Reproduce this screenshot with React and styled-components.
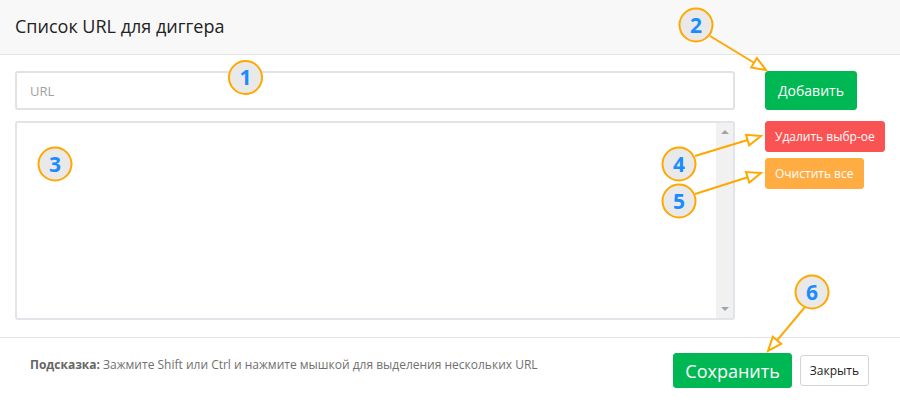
import React from "react";
import styled, { createGlobalStyle } from "styled-components";

const GlobalStyle = createGlobalStyle`
  html, body {
    margin: 0;
    padding: 0;
    background: #ffffff;
  }
  body {
    font-family: "Open Sans", "Noto Sans", sans-serif;
    color: #333;
  }
`;

const ORANGE = "#ffa800";
const BLUE = "#1a8cff";

function Arrow({ x1, y1, x2, y2 }) {
  const dx = x2 - x1;
  const dy = y2 - y1;
  const len = Math.hypot(dx, dy);
  const ux = dx / len;
  const uy = dy / len;
  const head = 14;
  const half = 5.5;
  const bx = x2 - ux * head;
  const by = y2 - uy * head;
  const p1 = `${bx - uy * half},${by + ux * half}`;
  const p2 = `${bx + uy * half},${by - ux * half}`;
  return (
    <g stroke={ORANGE} strokeWidth="2" fill="none" strokeLinejoin="miter">
      <line x1={x1} y1={y1} x2={bx} y2={by} />
      <polygon points={`${x2},${y2} ${p1} ${p2}`} fill="#fff" />
    </g>
  );
}

function Marker({ cx, cy, n }) {
  return (
    <g>
      <circle cx={cx} cy={cy} r="16.5" fill="#e9e9e9" stroke={ORANGE} strokeWidth="2" />
      <text
        x={cx}
        y={cy + 7.5}
        textAnchor="middle"
        fontFamily="'Open Sans', sans-serif"
        fontWeight="700"
        fontSize="21"
        fill={BLUE}
      >
        {n}
      </text>
    </g>
  );
}

function Annotations() {
  return (
    <Overlay width="900" height="403" viewBox="0 0 900 403">
      <Arrow x1={710} y1={36} x2={766} y2={70} />
      <Arrow x1={695} y1={156} x2={761} y2={136} />
      <Arrow x1={695} y1={194} x2={761} y2={173} />
      <Arrow x1={805} y1={307} x2={768} y2={351} />
      <Marker cx={245.5} cy={77.5} n="1" />
      <Marker cx={696} cy={25} n="2" />
      <Marker cx={55} cy={164} n="3" />
      <Marker cx={679} cy={164} n="4" />
      <Marker cx={679} cy={201} n="5" />
      <Marker cx={812} cy={292} n="6" />
    </Overlay>
  );
}

export default function App() {
  return (
    <>
      <GlobalStyle />
      <Modal>
        <Header>
          <Title>Список URL для диггера</Title>
        </Header>
        <Body>
          <UrlInput placeholder="URL" />
          <Button $variant="green" $size="md">Добавить</Button>
          <ListBox>
            <ListArea />
            <Track>
              <TriUp />
              <TriDown />
            </Track>
          </ListBox>
          <Stack>
            <Button $variant="red" $size="sm">Удалить выбр-ое</Button>
            <Button $variant="orange" $size="sm">Очистить все</Button>
          </Stack>
        </Body>
        <Footer>
          <Hint>
            <b>Подсказка:</b> Зажмите Shift или Ctrl и нажмите мышкой для выделения нескольких URL
          </Hint>
          <Actions>
            <Button $variant="green" $size="lg">Сохранить</Button>
            <Button $variant="default" $size="sm">Закрыть</Button>
          </Actions>
        </Footer>
        <Annotations />
      </Modal>
    </>
  );
}

const Modal = styled.div`
  position: relative;
  width: 900px;
  height: 403px;
  background: #fff;
  overflow: hidden;
`;

const Overlay = styled.svg`
  position: absolute;
  inset: 0;
  pointer-events: none;
`;

const Header = styled.div`
  box-sizing: border-box;
  height: 55px;
  background: #f8f8f8;
  border-bottom: 1px solid #e5e5e5;
  display: flex;
  align-items: center;
  padding: 0 15px;
`;

const Title = styled.h4`
  margin: 0;
  font-size: 18px;
  font-weight: 400;
  color: #222;
  padding-bottom: 2px;
`;

const Body = styled.div`
  display: grid;
  grid-template-columns: 720px auto;
  grid-template-rows: 39px 199px;
  column-gap: 30px;
  row-gap: 11px;
  padding: 16px 15px 17px;
  border-bottom: 1px solid #e5e5e5;
  align-items: start;
  justify-items: start;
`;

const UrlInput = styled.input`
  box-sizing: border-box;
  width: 720px;
  height: 39px;
  border: 2px solid #e2e2e2;
  border-radius: 3px;
  padding: 0 13px;
  font-family: inherit;
  font-size: 13px;
  color: #333;
  outline: none;
  &::placeholder {
    color: #a0a0a0;
  }
`;

const ListBox = styled.div`
  box-sizing: border-box;
  width: 720px;
  height: 199px;
  border: 2px solid #e1e4e8;
  border-radius: 3px;
  display: flex;
`;

const ListArea = styled.div`
  flex: 1;
`;

const Track = styled.div`
  width: 17px;
  background: #f1f1f1;
  display: flex;
  flex-direction: column;
  justify-content: space-between;
  align-items: center;
  padding: 7px 0;
`;

const TriUp = styled.span`
  width: 0;
  height: 0;
  border-left: 4px solid transparent;
  border-right: 4px solid transparent;
  border-bottom: 4px solid #a3a3a3;
`;

const TriDown = styled(TriUp)`
  border-bottom: none;
  border-top: 4px solid #a3a3a3;
`;

const Stack = styled.div`
  display: flex;
  flex-direction: column;
  align-items: flex-start;
  gap: 6px;
`;

const variants = {
  green: { bg: "#00b853", border: "#00b853", color: "#fff" },
  red: { bg: "#fa5353", border: "#fa5353", color: "#fff" },
  orange: { bg: "#ffad43", border: "#ffad43", color: "#fff" },
  default: { bg: "#fff", border: "#d4d4d4", color: "#222" },
};

const sizes = {
  sm: { h: "31px", fs: "12px", px: "9px" },
  md: { h: "39px", fs: "14px", px: "12px" },
  lg: { h: "35px", fs: "18px", px: "11px" },
};

const Button = styled.button`
  box-sizing: border-box;
  height: ${(p) => sizes[p.$size].h};
  padding: 0 ${(p) => sizes[p.$size].px};
  font-family: inherit;
  font-size: ${(p) => sizes[p.$size].fs};
  background: ${(p) => variants[p.$variant].bg};
  border: 1px solid ${(p) => variants[p.$variant].border};
  color: ${(p) => variants[p.$variant].color};
  border-radius: 3px;
  cursor: pointer;
  white-space: nowrap;
`;

const Footer = styled.div`
  display: flex;
  align-items: center;
  justify-content: space-between;
  padding: 15px 31px 15px 30px;
  height: 65px;
  box-sizing: border-box;
`;

const Hint = styled.p`
  margin: 0 0 13px;
  font-size: 12px;
  color: #707070;
  b {
    font-weight: 700;
    color: #666;
  }
`;

const Actions = styled.div`
  display: flex;
  align-items: center;
  gap: 8px;
`;
